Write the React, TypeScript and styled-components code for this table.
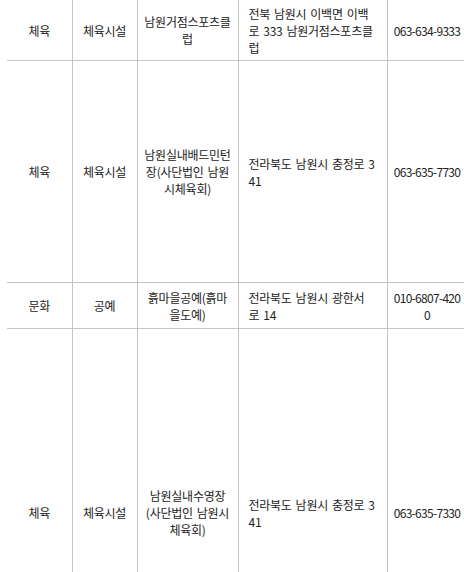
import React from 'react';
import styled, { createGlobalStyle } from 'styled-components';

const GlobalStyle = createGlobalStyle`
  html, body {
    margin: 0;
    padding: 0;
    background: #fff;
    overflow: hidden;
  }
`;

const Wrapper = styled.div`
  width: 464px;
  height: 572px;
  overflow: hidden;
  padding-left: 7px;
  box-sizing: border-box;
`;

const Table = styled.table`
  border-collapse: collapse;
  table-layout: fixed;
  width: 460px;
  margin-top: -1px;
  font-family: 'Noto Sans CJK KR', 'Noto Sans', sans-serif;
  font-size: 12px;
  line-height: 17px;
  letter-spacing: -0.25px;
  word-spacing: 1.5px;
  color: #222;
`;

const Col = styled.col<{ $w: number }>`
  width: ${(p) => p.$w}px;
`;

const Cell = styled.td`
  border: 1px solid #c4c4c4;
  padding: 0 6px;
  text-align: center;
  vertical-align: middle;
  word-break: break-all;

  &:first-child {
    border-left: none;
  }
`;

const AddressCell = styled(Cell)`
  padding: 0 11.5px 0 10px;
  text-align: left;
`;

const PhoneCell = styled(Cell)`
  padding: 0 6px;
  letter-spacing: -0.7px;
`;

const Row = styled.tr<{ $h: number }>`
  height: ${(p) => p.$h}px;
`;

type Item = {
  category: string;
  type: string;
  name: string;
  address: string;
  phone: string;
  height: number;
};

const widths = [65, 65, 101, 149, 80];

const items: Item[] = [
  {
    category: '체육',
    type: '체육시설',
    name: '남원거점스포츠클럽',
    address: '전북 남원시 이백면 이백로 333 남원거점스포츠클럽',
    phone: '063-634-9333',
    height: 61,
  },
  {
    category: '체육',
    type: '체육시설',
    name: '남원실내배드민턴장(사단법인 남원시체육회)',
    address: '전라북도 남원시 충정로 341',
    phone: '063-635-7730',
    height: 222,
  },
  {
    category: '문화',
    type: '공예',
    name: '흙마을공예(흙마을도예)',
    address: '전라북도 남원시 광한서로 14',
    phone: '010-6807-4200',
    height: 46,
  },
  {
    category: '체육',
    type: '체육시설',
    name: '남원실내수영장(사단법인 남원시체육회)',
    address: '전라북도 남원시 충정로 341',
    phone: '063-635-7330',
    height: 368,
  },
];

export default function App() {
  return (
    <>
      <GlobalStyle />
      <Wrapper>
        <Table>
          <colgroup>
            {widths.map((w, i) => (
              <Col key={i} $w={w} />
            ))}
          </colgroup>
          <tbody>
            {items.map((it, i) => (
              <Row key={i} $h={it.height}>
                <Cell>{it.category}</Cell>
                <Cell>{it.type}</Cell>
                <Cell>{it.name}</Cell>
                <AddressCell>{it.address}</AddressCell>
                <PhoneCell>{it.phone}</PhoneCell>
              </Row>
            ))}
          </tbody>
        </Table>
      </Wrapper>
    </>
  );
}
